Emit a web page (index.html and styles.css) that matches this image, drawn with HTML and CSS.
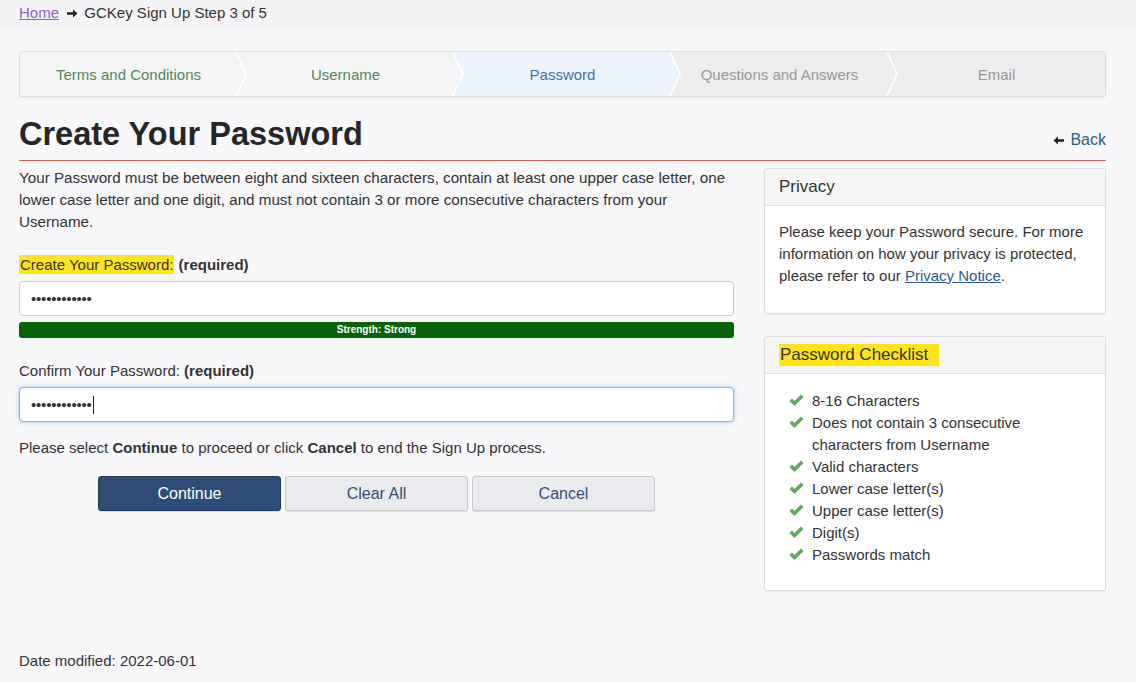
FILE: index.html
```html
<!DOCTYPE html>
<html lang="en">
<head>
  <meta charset="UTF-8" />
  <title>GCKey Sign Up Step 3 of 5</title>
  <link rel="stylesheet" href="styles.css">
</head>
<body>

  <!-- Breadcrumb -->
  <div class="breadcrumb">
    <a href="#">Home</a>
    <svg class="crumb-arrow" width="11" height="9" viewBox="0 0 11 9"><path d="M0 3.2h6V0.5L10.5 4.5 6 8.5V5.8H0z" fill="#222"/></svg>
    <span>GCKey Sign Up Step 3 of 5</span>
  </div>

  <main class="page">

    <!-- Steps -->
    <ol class="steps">
      <li class="step done">Terms and Conditions</li>
      <li class="step done">Username</li>
      <li class="step active">Password</li>
      <li class="step todo">Questions and Answers</li>
      <li class="step todo">Email</li>
    </ol>

    <div class="title-row">
      <h1>Create Your Password</h1>
      <a class="back" href="#">
        <svg width="11" height="9" viewBox="0 0 11 9"><path d="M11 3.2H5V0.5L0.5 4.5 5 8.5V5.8h6z" fill="#222"/></svg>
        Back
      </a>
    </div>

    <div class="columns">
      <section class="main-col">
        <p class="intro">Your Password must be between eight and sixteen characters, contain at least one upper case letter, one lower case letter and one digit, and must not contain 3 or more consecutive characters from your Username.</p>

        <label class="field-label"><span class="hl">Create Your Password:</span> <strong>(required)</strong></label>
        <div class="input">••••••••••••</div>
        <div class="strength">Strength: Strong</div>

        <label class="field-label second">Confirm Your Password: <strong>(required)</strong></label>
        <div class="input focus">••••••••••••<span class="caret"></span></div>

        <p class="note">Please select <strong>Continue</strong> to proceed or click <strong>Cancel</strong> to end the Sign Up process.</p>

        <div class="actions">
          <button class="btn primary">Continue</button>
          <button class="btn">Clear All</button>
          <button class="btn">Cancel</button>
        </div>
      </section>

      <aside class="side-col">
        <div class="panel">
          <div class="panel-head">Privacy</div>
          <div class="panel-body">
            Please keep your Password secure. For more information on how your privacy is protected, please refer to our <a href="#">Privacy Notice</a>.
          </div>
        </div>

        <div class="panel checklist">
          <div class="panel-head"><span class="hl">Password Checklist&nbsp;&nbsp;</span></div>
          <div class="panel-body">
            <ul class="checks">
              <li>8-16 Characters</li>
              <li>Does not contain 3 consecutive characters from Username</li>
              <li>Valid characters</li>
              <li>Lower case letter(s)</li>
              <li>Upper case letter(s)</li>
              <li>Digit(s)</li>
              <li>Passwords match</li>
            </ul>
          </div>
        </div>
      </aside>
    </div>

    <p class="modified">Date modified: 2022-06-01</p>
  </main>

</body>
</html>
```

FILE: styles.css
```css
body {
  margin: 0;
  background: #f8f7fa;
  font-family: "Liberation Sans", Arial, sans-serif;
  font-size: 15px;
  color: #333;
}
a {
  color: #2b5c8f;
}
.breadcrumb {
  background: #f4f3f5;
  padding: 4px 19px 0;
  height: 27px;
  box-sizing: border-box;
  font-size: 15px;
  color: #333;
}
.breadcrumb a {
  color: #8e5ec7;
}
.crumb-arrow {
  margin: 0 2px 0 4px;
}
.page {
  padding: 0 30px 0 19px;
}
.steps {
  list-style: none;
  margin: 24px 0 0;
  padding: 0;
  display: flex;
  height: 44px;
  background: #fff;
  border: 1px solid #dcdcdf;
  border-radius: 3px;
  box-shadow: 0 1px 2px rgba(0,0,0,0.06);
}
.step {
  flex: 1;
  display: flex;
  align-items: center;
  justify-content: center;
  font-size: 15px;
  margin-left: -8px;
  padding-right: 8px;
  clip-path: polygon(0 0, calc(100% - 10px) 0, 100% 50%, calc(100% - 10px) 100%, 0 100%, 10px 50%);
}
.step:first-child {
  margin-left: 0;
  clip-path: polygon(0 0, calc(100% - 10px) 0, 100% 50%, calc(100% - 10px) 100%, 0 100%);
}
.step:last-child {
  padding-right: 0;
  clip-path: polygon(0 0, 100% 0, 100% 100%, 0 100%, 10px 50%);
}
.step.done {
  background: #f5f5f8;
  color: #4f8a56;
}
.step.active {
  background: #eef4fd;
  color: #3b73ad;
}
.step.todo {
  background: #ededee;
  color: #999;
}
.title-row {
  display: flex;
  justify-content: space-between;
  align-items: flex-end;
  border-bottom: 1px solid #d4625a;
  padding-bottom: 7px;
  margin-top: 18px;
}
h1 {
  margin: 0;
  font-size: 32.5px;
  font-weight: bold;
  color: #262626;
  line-height: 38px;
}
.back {
  text-decoration: none;
  font-size: 16px;
  margin-bottom: 4px;
}
.back svg {
  margin-right: 2px;
}
.columns {
  display: flex;
  gap: 30px;
}
.main-col {
  flex: 1;
}
.side-col {
  width: 342px;
  padding-top: 7px;
}
.intro {
  margin: 6px 0 0;
  line-height: 22px;
  font-size: 15.2px;
}
.field-label {
  display: block;
  margin-top: 21px;
  line-height: 22px;
}
.field-label.second {
  margin-top: 22px;
}
.hl {
  background: #ffe41a;
  padding: 1px 1px;
}
.input {
  margin-top: 5px;
  height: 35px;
  box-sizing: border-box;
  background: #fff;
  border: 1px solid #ccc;
  border-radius: 4px;
  padding: 0 11px;
  display: flex;
  align-items: center;
  font-size: 15px;
  letter-spacing: -0.2px;
  color: #333;
}
.input.focus {
  border-color: #7fb3e8;
  box-shadow: 0 0 4px rgba(102,175,233,0.6);
}
.caret {
  display: inline-block;
  width: 1px;
  height: 18px;
  background: #222;
  margin-left: 1px;
}
.strength {
  margin-top: 6px;
  height: 16px;
  background: #056305;
  border-radius: 3px;
  color: #fff;
  font-size: 10px;
  font-weight: bold;
  text-align: center;
  line-height: 16px;
}
.note {
  margin: 15px 0 0;
  line-height: 22px;
}
.actions {
  display: flex;
  justify-content: center;
  gap: 4px;
  margin-top: 17px;
}
.btn {
  width: 183px;
  height: 35px;
  border: 1px solid #c8c8cc;
  border-radius: 3px;
  background: #eaebee;
  color: #335075;
  font-family: "Liberation Sans", Arial, sans-serif;
  font-size: 16px;
  box-shadow: 0 1px 1px rgba(0,0,0,0.12);
  cursor: pointer;
}
.btn.primary {
  background: #2f4c76;
  border-color: #24395a;
  color: #fff;
}
.panel {
  background: #fff;
  border: 1px solid #dddde0;
  border-radius: 3px;
  box-shadow: 0 1px 2px rgba(0,0,0,0.06);
}
.panel + .panel {
  margin-top: 22px;
}
.panel-head {
  background: #f5f5f6;
  border-bottom: 1px solid #e2e2e5;
  height: 37px;
  box-sizing: border-box;
  padding: 0 14px;
  display: flex;
  align-items: center;
  font-size: 17px;
  color: #333;
}
.panel-body {
  padding: 15px 14px 26px;
  line-height: 22px;
}
.checklist .panel-body {
  padding: 16px 14px 24px 24px;
}
.checks {
  list-style: none;
  margin: 0;
  padding: 0;
}
.checks li {
  position: relative;
  padding-left: 23px;
  padding-right: 60px;
}
.checks li::before {
  content: "";
  position: absolute;
  left: 0;
  top: 4px;
  width: 15px;
  height: 13px;
  background: url("data:image/svg+xml;utf8,<svg xmlns='http://www.w3.org/2000/svg' viewBox='0 0 15 13'><path d='M0.5 7 L3 4.5 L5.5 7 L12 0.5 L14.5 3 L5.5 12 Z' fill='%235cab5c'/></svg>") no-repeat;
}
.modified {
  margin: 59px 0 0;
  line-height: 22px;
}
```
